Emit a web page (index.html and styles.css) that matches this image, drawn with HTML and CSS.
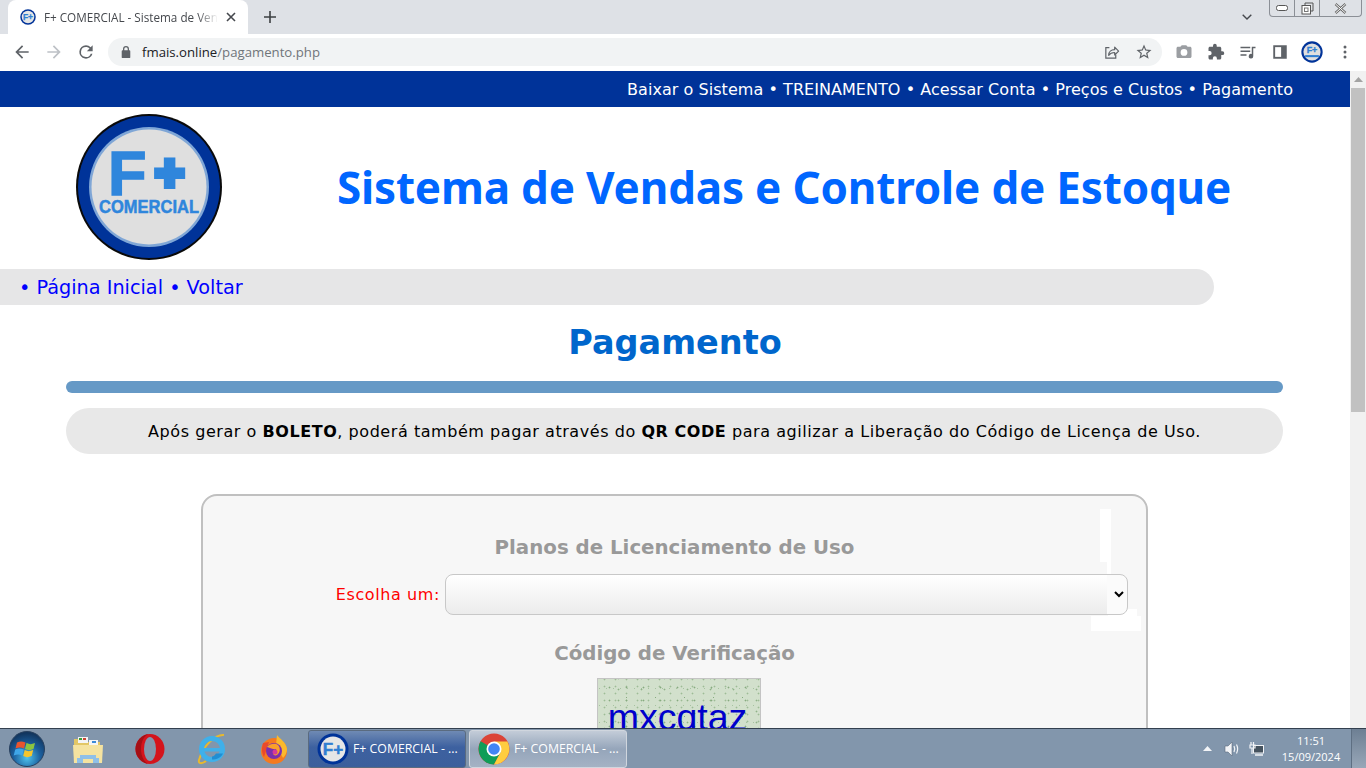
FILE: index.html
```html
<!DOCTYPE html>
<html lang="pt-BR">
<head>
    <meta charset="UTF-8">
    <meta name="viewport" content="width=device-width, initial-scale=1.0">
    <title>F+ COMERCIAL - Sistema de Vendas e Controle de Estoque</title>
    <link rel="stylesheet" href="styles.css">
</head>
<body>
    <div class="tabstrip">
        <div class="tab">
            <svg class="tab-icon" width="16" height="16" viewBox="0 0 32 32">
                <circle cx="16" cy="16" r="15.500" fill="#003399"/>
                <circle cx="16" cy="16" r="12.500" fill="#e6e6e6"/>
                <text x="16" y="22" class="mini-mark" text-anchor="middle">F+</text>
            </svg>
            <span class="tab-title">F+ COMERCIAL - Sistema de Vendas e Controle</span>
            <svg class="tab-close" width="10" height="10" viewBox="0 0 10 10"><path d="M1 1l8 8M9 1l-8 8" stroke="#45484d" stroke-width="1.6"/></svg>
        </div>
        <svg class="new-tab" width="12" height="12" viewBox="0 0 12 12"><path d="M6 0v12M0 6h12" stroke="#3c4043" stroke-width="1.6"/></svg>
        <svg class="tab-search" width="10" height="6" viewBox="0 0 10 6"><path d="M.7.7L5 5l4.3-4.3" fill="none" stroke="#45484d" stroke-width="1.4"/></svg>
        <div class="win-controls">
            <span class="win-btn win-min"><svg width="12" height="6" viewBox="0 0 12 6"><rect x=".5" y=".5" width="11" height="5" rx="2" fill="#fff" stroke="#555"/></svg></span>
            <span class="win-btn win-max"><svg width="13" height="13" viewBox="0 0 13 13"><path d="M4 3V1h8v8h-2" fill="none" stroke="#555"/><rect x="1" y="3.500" width="8.500" height="8.500" fill="#fff" stroke="#555"/><rect x="3.500" y="6" width="3.500" height="3.500" fill="none" stroke="#777"/></svg></span>
            <span class="win-btn win-close"><svg width="13" height="11" viewBox="0 0 13 11"><path d="M1.500 1l10 9M11.500 1l-10 9" stroke="#666" stroke-width="2.400"/><path d="M1.500 1l10 9M11.500 1l-10 9" stroke="#fff" stroke-width="1"/></svg></span>
        </div>
    </div>

    <div class="toolbar">
        <svg class="tool-icon nav-first" viewBox="0 0 24 24" fill="#5f6368"><path d="M20 11H7.800l5.600-5.600L12 4l-8 8 8 8 1.400-1.400L7.800 13H20z"/></svg>
        <svg class="tool-icon" viewBox="0 0 24 24" fill="#bdc1c6"><path d="M4 11h12.200l-5.600-5.600L12 4l8 8-8 8-1.400-1.400 5.600-5.600H4z"/></svg>
        <svg class="tool-icon" viewBox="0 0 24 24" fill="#5f6368"><path d="M17.650 6.350A7.960 7.960 0 0 0 12 4a8 8 0 1 0 7.750 10h-2.080A6 6 0 1 1 12 6c1.660 0 3.140.690 4.220 1.780L13 11h7V4z"/></svg>
        <div class="omnibox">
            <svg class="lock" width="12" height="12" viewBox="0 0 12 14" fill="#5f6368"><path d="M10 5H9.500V3.500a3.500 3.500 0 0 0-7 0V5H2a1 1 0 0 0-1 1v7a1 1 0 0 0 1 1h8a1 1 0 0 0 1-1V6a1 1 0 0 0-1-1zM4 3.500a2 2 0 0 1 4 0V5H4z"/></svg>
            <span class="url"><span class="url-host">fmais.online</span>/pagamento.php</span>
            <svg class="omni-icon" viewBox="0 0 24 24" fill="none" stroke="#5f6368" stroke-width="1.700"><path d="M9 5H4v15h14v-5"/><path d="M8 16c0-5 3.500-8 8.500-8V4.500L22 10l-5.500 5.500V12c-3.500 0-6.500 1-8.500 4z" stroke-linejoin="round"/></svg>
            <svg class="omni-icon star" viewBox="0 0 24 24" fill="#5f6368"><path d="M22 9.240l-7.190-.620L12 2 9.190 8.630 2 9.240l5.460 4.730L5.820 21 12 17.270 18.180 21l-1.630-7.030zM12 15.400l-3.760 2.270 1-4.280-3.320-2.880 4.380-.380L12 6.100l1.710 4.040 4.380.380-3.320 2.880 1 4.280z"/></svg>
        </div>
        <div class="extensions">
            <svg class="ext-icon" viewBox="0 0 24 24" fill="#9b9ea2"><path d="M9 3L7.170 5H4c-1.100 0-2 .900-2 2v11c0 1.100.900 2 2 2h16c1.100 0 2-.900 2-2V7c0-1.100-.900-2-2-2h-3.170L15 3zm3 14a4.500 4.500 0 1 1 0-9 4.500 4.500 0 0 1 0 9z"/></svg>
            <svg class="ext-icon" viewBox="0 0 24 24" fill="#5f6368"><path d="M20.500 11H19V7c0-1.100-.900-2-2-2h-4V3.500a2.500 2.500 0 0 0-5 0V5H4c-1.100 0-2 .900-2 2v3.800h1.500a2.700 2.700 0 0 1 0 5.400H2V20c0 1.100.900 2 2 2h3.800v-1.500a2.700 2.700 0 0 1 5.400 0V22H17c1.100 0 2-.900 2-2v-4h1.500a2.500 2.500 0 0 0 0-5z"/></svg>
            <svg class="ext-icon" viewBox="0 0 24 24" fill="#5f6368"><path d="M2 5h13v2H2zM2 10h13v2H2zM2 15h8v2H2zM17 5h5v2h-3v10.500a3 3 0 1 1-2-2.800z"/></svg>
            <svg class="ext-icon" viewBox="0 0 24 24"><path d="M3 3h18v18H3z" fill="#5f6368"/><path d="M5.500 5.500h8v13h-8z" fill="#fff"/></svg>
            <svg class="profile" width="22" height="22" viewBox="0 0 32 32">
                <circle cx="16" cy="16" r="15.500" fill="#003399"/>
                <circle cx="16" cy="16" r="12.500" fill="#dfdfdf"/>
                <text x="16" y="18" class="profile-mark" text-anchor="middle">F+</text>
                <rect x="6" y="20.500" width="20" height="3" fill="#2f7ed2"/>
            </svg>
            <svg class="menu-dots" width="4" height="14" viewBox="0 0 4 14" fill="#5f6368"><circle cx="2" cy="2" r="1.500"/><circle cx="2" cy="7" r="1.500"/><circle cx="2" cy="12" r="1.500"/></svg>
        </div>
    </div>

    <div class="viewport">
        <main class="page">
            <div class="topbar">Baixar o Sistema • TREINAMENTO • Acessar Conta • Preços e Custos • Pagamento</div>

            <header class="masthead">
                <svg class="site-logo" width="146" height="146" viewBox="0 0 146 146">
                    <circle cx="73" cy="73" r="73" fill="#0a0a0a"/>
                    <circle cx="73" cy="73" r="71" fill="#003399"/>
                    <circle cx="73" cy="73" r="60" fill="#7fa6d6"/>
                    <circle cx="73" cy="73" r="57.500" fill="#dfdfdf"/>
                    <text x="32" y="81" class="logo-f">F</text>
                    <text x="79" y="76" class="logo-plus">+</text>
                    <text x="73" y="99" class="logo-name" text-anchor="middle" textLength="100" lengthAdjust="spacingAndGlyphs">COMERCIAL</text>
                </svg>
                <h1 class="site-title">Sistema de Vendas e Controle de Estoque</h1>
            </header>

            <nav class="crumbs">• <a href="#">Página Inicial</a> • <a href="#">Voltar</a></nav>

            <h2 class="page-title">Pagamento</h2>
            <div class="rule"></div>

            <p class="notice">Após gerar o <b>BOLETO</b>, poderá também pagar através do <b>QR CODE</b> para agilizar a Liberação do Código de Licença de Uso.</p>

            <form class="plan-form">
                <div class="glitch glitch-a"></div>
                <div class="glitch glitch-b"></div>
                <div class="glitch glitch-c"></div>
                <div class="glitch glitch-d"></div>

                <h3 class="form-title">Planos de Licenciamento de Uso</h3>
                <div class="plan-row">
                    <label class="plan-label" for="plano">Escolha um:</label>
                    <select class="plan-select" id="plano" name="plano">
                        <option value=""></option>
                    </select>
                </div>
                <h3 class="form-title code-title">Código de Verificação</h3>
                <div class="captcha">mxcqtaz</div>
            </form>
        </main>

        <div class="scrollbar">
            <svg class="scroll-up" width="9" height="5" viewBox="0 0 9 5"><path d="M4.500 0L9 5H0z" fill="#a3a3a3"/></svg>
            <div class="scroll-thumb"></div>
        </div>
    </div>

    <footer class="taskbar">
        <svg class="start" width="38" height="38" viewBox="0 0 38 38">
            <defs>
                <radialGradient id="orb" cx=".5" cy=".75" r=".7"><stop offset="0" stop-color="#4fc3ee"/><stop offset=".55" stop-color="#1b5f9e"/><stop offset="1" stop-color="#12365f"/></radialGradient>
            </defs>
            <circle cx="19" cy="19" r="17.500" fill="url(#orb)" stroke="#28405e"/>
            <path d="M9 12.500c3-1.500 5-1.500 8.500 0l-1.500 6c-3-1.500-5-1.500-8.500 0z" fill="#e8552e"/>
            <path d="M18.500 13c3 1.500 5 1.500 8.500 0l-1.500 6c-3.500 1.500-5.500 1.500-8.500 0z" fill="#8cc540"/>
            <path d="M7.200 19.500c3-1.500 5-1.500 8.500 0l-1.500 6c-3-1.500-5-1.500-8.500 0z" fill="#3fa6e8"/>
            <path d="M16.700 20c3 1.500 5 1.500 8.500 0l-1.500 6c-3.500 1.500-5.500 1.500-8.500 0z" fill="#f5c52e"/>
        </svg>
        <svg class="pin" width="32" height="32" viewBox="0 0 32 32">
            <path d="M2 6h11l2 3h13v6H2z" fill="#e3c766"/>
            <rect x="6" y="4" width="10" height="6" fill="#f4f4f4"/><rect x="7" y="5" width="3" height="2" fill="#3ca03c"/><rect x="11" y="5" width="3" height="2" fill="#cc4433"/>
            <rect x="17" y="7" width="9" height="5" fill="#f4f4f4"/><rect x="20" y="8" width="4" height="2" fill="#3c8ad8"/>
            <path d="M1 12h30l-1 18H2z" fill="#f5e3a0"/>
            <path d="M8 22h16v3h3v5h-6v-4H11v4H5v-5h3z" fill="#8fc0e8"/>
        </svg>
        <svg class="pin" width="32" height="32" viewBox="0 0 32 32"><ellipse cx="16" cy="16" rx="14.500" ry="15" fill="#d4141c"/><ellipse cx="16" cy="16" rx="6" ry="12" fill="#8296ac"/><path d="M16 1C8 1 1.500 8 1.500 16S8 31 16 31c-5 0-9-7-9-15S11 1 16 1z" fill="#a50f15"/></svg>
        <svg class="pin" width="32" height="32" viewBox="0 0 32 32"><path d="M28 2C20 1 7 12 3 27c-1 4 3 4 7 1" fill="none" stroke="#e8b92e" stroke-width="2"/><circle cx="16" cy="16" r="10.500" fill="none" stroke="#3fb0ea" stroke-width="5"/><path d="M7 15h20v3.500H7z" fill="#3fb0ea"/><path d="M20 20.500h7c-2 4-6 6-11 6v-3c2 0 3-1.500 4-3z" fill="#1f8ed4"/></svg>
        <svg class="pin pin-fox" width="32" height="32" viewBox="0 0 32 32"><circle cx="16" cy="18" r="13" fill="#f57a1f"/><path d="M5 10c-1 4-2 9 1 14L11 9z" fill="#ea4a2b"/><path d="M19 2c3 4 9 7 10 14 0 4-2 7-4 9L18 12z" fill="#fbb92c"/><circle cx="16" cy="18" r="8" fill="#7b2fae"/><path d="M9 14c3-4 9-4 11-2 3 3 2 8-1 10-2 1-4 0-4-2 3 0 4-2 3-4-2 1-5-1-9-2z" fill="#f9a02a"/><circle cx="17" cy="19" r="2.500" fill="#d63a9a"/></svg>

        <div class="task-btn task-active">
            <svg width="32" height="32" viewBox="0 0 32 32">
                <circle cx="16" cy="16" r="15.500" fill="#003399"/>
                <circle cx="16" cy="16" r="12.500" fill="#e6e6e6"/>
                <text x="16" y="22" class="mini-mark" text-anchor="middle">F+</text>
            </svg>
            <span class="task-label">F+ COMERCIAL - ...</span>
        </div>
        <div class="task-btn task-idle">
            <svg width="32" height="32" viewBox="0 0 32 32">
                <circle cx="16" cy="16" r="15.500" fill="#db4437"/>
                <path d="M16 16L2.600 8.300A15.500 15.500 0 0 0 16 31.500l7-13z" fill="#0f9d58"/>
                <path d="M16 8.500h13.400A15.500 15.500 0 0 1 16 31.500l7-13z" fill="#ffcd40"/>
                <circle cx="16" cy="16" r="7.500" fill="#fff"/><circle cx="16" cy="16" r="5.800" fill="#4285f4"/>
            </svg>
            <span class="task-label">F+ COMERCIAL - ...</span>
        </div>

        <div class="tray">
            <svg width="9" height="5" viewBox="0 0 9 5"><path d="M4.500 0L9 5H0z" fill="#f2f4f7"/></svg>
            <svg class="tray-sound" width="16" height="16" viewBox="0 0 16 16"><path d="M1 5h3l4-4v14l-4-4H1z" fill="#f2f4f7" stroke="#5a6a7c" stroke-width=".6"/><path d="M10 5c1 2 1 4 0 6M12.500 3.500c1.500 3 1.500 6 0 9" fill="none" stroke="#f2f4f7" stroke-width="1.200"/></svg>
            <svg width="16" height="16" viewBox="0 0 16 16"><rect x="4.500" y="4.500" width="10" height="7.500" fill="#46535f" stroke="#f2f4f7"/><path d="M6 14h8" stroke="#f2f4f7" stroke-width="1.500"/><path d="M2 1v3M4.500 1v3M1 4h5v3H1zM3 7v6" fill="none" stroke="#f2f4f7" stroke-width="1.200"/></svg>
            <div class="clock"><span>11:51</span><span>15/09/2024</span></div>
        </div>
        <div class="show-desktop"></div>
    </footer>
</body>
</html>
```

FILE: styles.css
```css
/* Janela do navegador */
* {
    box-sizing: border-box;
}
html,
body {
    height: 100%;
    margin: 0;
    overflow: hidden;
}
body {
    display: flex;
    flex-direction: column;
    font-family: "DejaVu Sans", Verdana, sans-serif;
    background-color: #fff;
}
.logo-f {
    font: bold 63px "Liberation Sans", Arial, sans-serif;
    fill: #2f86dc;
    stroke: #2f86dc;
    stroke-width: 1.5px;
}
.logo-plus {
    font: bold 50px "Liberation Sans", Arial, sans-serif;
    fill: #2f86dc;
    stroke: #2f86dc;
    stroke-width: 6px;
}
.logo-name {
    font: bold 18px "Liberation Sans", Arial, sans-serif;
    fill: #2f86dc;
    stroke: #2f86dc;
    stroke-width: 0.5px;
}
.mini-mark {
    font: bold 17px "Liberation Sans", Arial, sans-serif;
    fill: #2f7ed2;
    stroke: #2f7ed2;
    stroke-width: 0.5px;
}
.profile-mark {
    font: bold 13px "Liberation Sans", Arial, sans-serif;
    fill: #2f7ed2;
    stroke: #2f7ed2;
    stroke-width: 0.5px;
}

/* Abas */
.tabstrip {
    height: 34px;
    flex: none;
    display: flex;
    align-items: flex-start;
    background-color: #dee1e6;
    position: relative;
}
.tab {
    width: 240px;
    height: 34px;
    margin-left: 8px;
    padding: 0 12px;
    display: flex;
    align-items: center;
    background-color: #fff;
    border-radius: 8px 8px 0 0;
}
.tab-icon {
    flex: none;
}
.tab-title {
    flex: 1;
    margin-left: 8px;
    overflow: hidden;
    white-space: nowrap;
    font: 11.700px "Open Sans", "Noto Sans", sans-serif;
    color: #45484d;
    -webkit-mask-image: linear-gradient(to right, #000 88%, transparent);
    mask-image: linear-gradient(to right, #000 88%, transparent);
}
.tab-close {
    flex: none;
    margin-left: 8px;
}
.new-tab {
    margin: 11px 0 0 16px;
}
.tab-search {
    margin: 14px 0 0 966px;
}
.win-controls {
    position: absolute;
    top: 0;
    right: 4px;
    width: 93px;
    height: 17px;
    display: flex;
    border: 1px solid #8b8f96;
    border-top: none;
    border-radius: 0 0 4px 4px;
}
.win-btn {
    display: flex;
    align-items: center;
    justify-content: center;
    border-right: 1px solid #8b8f96;
}
.win-min,
.win-max {
    width: 25px;
}
.win-close {
    flex: 1;
    border-right: none;
}

/* Barra de endereco */
.toolbar {
    height: 37px;
    flex: none;
    display: flex;
    align-items: center;
    padding-bottom: 1px;
    background-color: #fff;
}
.tool-icon {
    width: 20px;
    height: 20px;
    margin-right: 12px;
}
.nav-first {
    margin-left: 12px;
}
.omnibox {
    width: 1054px;
    height: 28px;
    margin-left: 0;
    padding: 0 9px 0 12px;
    display: flex;
    align-items: center;
    background-color: #f1f3f4;
    border-radius: 14px;
}
.url {
    flex: 1;
    margin-left: 10px;
    font: 13.200px "Open Sans", "Noto Sans", sans-serif;
    color: #70757a;
}
.url-host {
    color: #202124;
}
.omni-icon {
    width: 17px;
    height: 17px;
    margin-right: 15px;
}
.omni-icon.star {
    width: 18px;
    height: 18px;
    margin-right: 0;
}
.extensions {
    display: flex;
    align-items: center;
    margin-left: 13px;
}
.ext-icon {
    width: 18px;
    height: 18px;
    margin-right: 14px;
}
.profile {
    margin-left: -2px;
}
.menu-dots {
    margin-left: 20px;
}

/* Conteudo da pagina */
.viewport {
    flex: 1;
    min-height: 0;
    display: flex;
}
.page {
    flex: 1;
    min-width: 0;
    overflow: hidden;
}
.topbar {
    height: 36px;
    padding-right: 57px;
    line-height: 37px;
    text-align: right;
    font-size: 16px;
    letter-spacing: 0.05px;
    white-space: nowrap;
    color: #fff;
    background-color: #003399;
}
.masthead {
    height: 162px;
    padding: 7px 0 0 76px;
    display: flex;
}
.site-logo {
    flex: none;
}
.site-title {
    margin: 43px 0 0 115px;
    font-family: "Noto Sans", "Open Sans", sans-serif;
    font-size: 44px;
    letter-spacing: -0.18px;
    line-height: 60px;
    font-weight: bold;
    white-space: nowrap;
    color: #0066ff;
}
.crumbs {
    width: 1214px;
    height: 36px;
    padding-left: 19px;
    line-height: 37px;
    font-size: 19.250px;
    color: #0000ff;
    background-color: #e6e6e7;
    border-radius: 0 18px 18px 0;
}
.crumbs a {
    color: #0000ff;
    text-decoration: none;
}
.page-title {
    margin: 17px 0 0;
    text-align: center;
    font-size: 33.500px;
    line-height: 42px;
    color: #0066cc;
}
.rule {
    height: 12px;
    margin: 17px 67px 0 66px;
    background-color: #6699c6;
    border-radius: 6px;
}
.notice {
    height: 46px;
    margin: 15px 67px 0 66px;
    line-height: 47px;
    text-align: center;
    font-size: 16px;
    letter-spacing: 0.555px;
    white-space: nowrap;
    color: #000;
    background-color: #e8e8e8;
    border-radius: 23px;
}

/* Formulario */
.plan-form {
    position: relative;
    width: 947px;
    height: 400px;
    margin: 40px 0 0 201px;
    padding: 37px 18px 0 0;
    background-color: #f7f7f7;
    border: 2px solid #c0c0c0;
    border-radius: 16px;
}
.form-title {
    margin: 0;
    padding-left: 18px;
    text-align: center;
    font-size: 19.800px;
    line-height: 30px;
    color: #999;
}
.code-title {
    margin-top: 24px;
}
.plan-row {
    position: relative;
    z-index: 1;
    margin-top: 11px;
    display: flex;
    align-items: center;
    justify-content: flex-end;
}
.plan-label {
    margin-right: 5px;
    font-size: 16px;
    letter-spacing: 0.6px;
    color: #ff0000;
}
.plan-select {
    width: 683px;
    height: 41px;
    padding: 0 8px;
    border: 1px solid #c8c8c8;
    border-radius: 8px;
    background-color: #fbfbfb;
    background-image: linear-gradient(to bottom, #fff, #ececec);
    background-size: calc(100% - 20px) 100%;
    background-repeat: no-repeat;
}
.captcha {
    width: 164px;
    height: 60px;
    margin: 9px 0 0 394px;
    padding: 16px 3px 0 0;
    font: 37.500px/44px "Liberation Sans", Arial, sans-serif;
    text-align: center;
    color: #0000cc;
    border: 1px solid #c4c4c4;
    background-color: #d2e0cc;
    background-image:
        radial-gradient(circle, #86ab7f 0.8px, transparent 1.1px),
        radial-gradient(circle, #8fb288 0.8px, transparent 1.1px),
        radial-gradient(circle, #9dbc96 0.8px, transparent 1.1px),
        radial-gradient(circle, #86ab7f 0.7px, transparent 1px),
        radial-gradient(circle, #a6c2a0 0.7px, transparent 1px);
    background-size: 17px 13px, 23px 11px, 11px 7px, 29px 19px, 7px 17px;
    background-position: 3px 2px, 9px 5px, 1px 4px, 14px 9px, 5px 1px;
}

.glitch {
    position: absolute;
    background-color: #fff;
}
.glitch-a {
    left: 897px;
    top: 13px;
    width: 11px;
    height: 53px;
}
.glitch-b {
    left: 904px;
    top: 66px;
    width: 4px;
    height: 13px;
}
.glitch-c {
    left: 905px;
    top: 113px;
    width: 29px;
    height: 8px;
}
.glitch-d {
    left: 888px;
    top: 120px;
    width: 50px;
    height: 15px;
}

/* Barra de rolagem */
.scrollbar {
    width: 16px;
    flex: none;
    display: flex;
    flex-direction: column;
    align-items: center;
    background-color: #f1f1f1;
}
.scroll-up {
    margin-top: 6px;
}
.scroll-thumb {
    width: 14px;
    height: 324px;
    margin-top: 6px;
    background-color: #c1c1c1;
}

/* Barra de tarefas */
.taskbar {
    height: 40px;
    flex: none;
    display: flex;
    align-items: center;
    background-color: #8296ac;
    border-top: 1px solid #33404f;
    font-family: "Open Sans", "Noto Sans", sans-serif;
    color: #fff;
}
.start {
    margin-left: 8px;
    flex: none;
}
.pin {
    flex: none;
    margin-left: 30px;
}
.start + .pin {
    margin-left: 26px;
}
.pin-fox {
    margin-right: 18px;
}
.task-btn {
    width: 158px;
    height: 38px;
    margin-right: 3px;
    padding-left: 8px;
    display: flex;
    align-items: center;
    gap: 4px;
    border: 1px solid #5a6b80;
    border-radius: 3px;
    font-size: 12.300px;
}
.task-active {
    background-image: linear-gradient(to bottom, #6f8ab4, #3d61a0 45%, #3c5f9c);
}
.task-idle {
    background-image: linear-gradient(to bottom, #c3ccd8, #95a5ba 50%, #a4b2c4);
    border-color: #d0d6de;
}
.tray {
    margin-left: auto;
    display: flex;
    align-items: center;
}
.tray-sound {
    margin: 0 9px 0 12px;
}
.clock {
    width: 60px;
    margin-left: 16px;
    display: flex;
    flex-direction: column;
    align-items: center;
    font-size: 11px;
    line-height: 16px;
}
.show-desktop {
    width: 15px;
    height: 39px;
    margin-left: 10px;
    background-image: linear-gradient(to bottom, #6d7f93, #98a7b8);
    border-left: 1px solid #5e6f82;
}
```
